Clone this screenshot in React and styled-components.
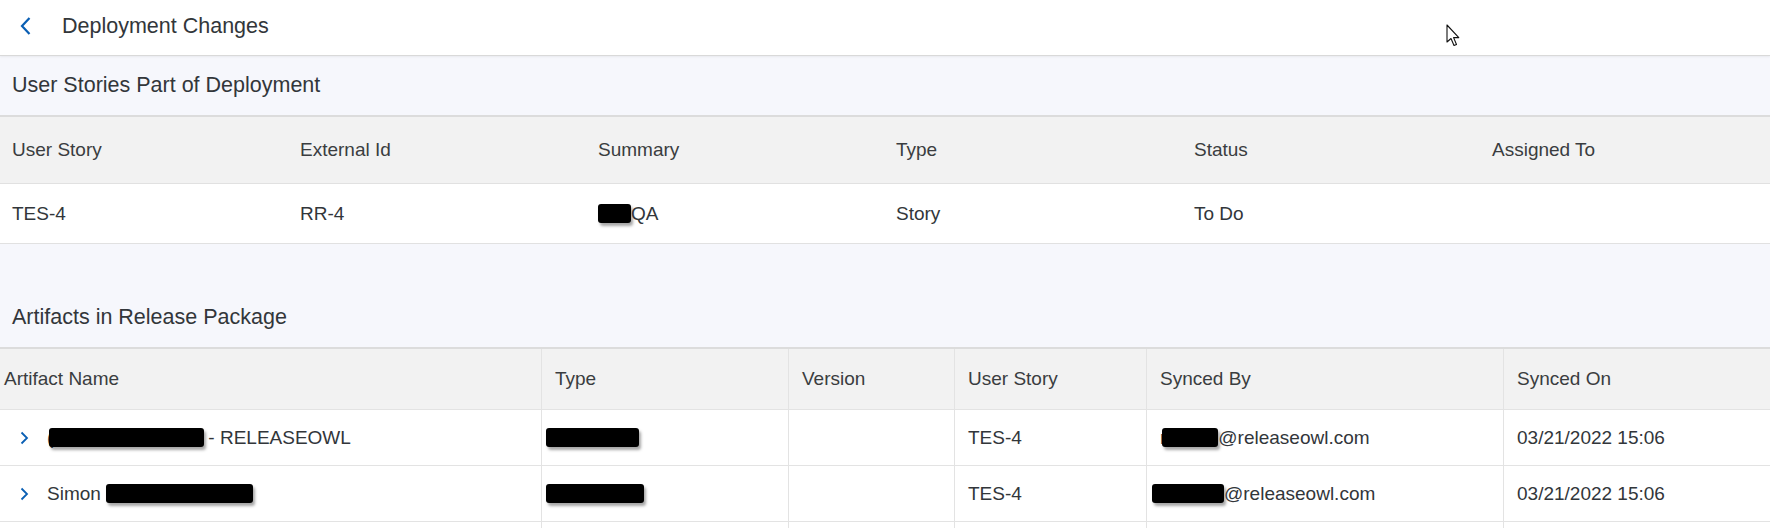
import styled, { createGlobalStyle } from "styled-components";

const GlobalStyle = createGlobalStyle`
  html, body {
    margin: 0;
    padding: 0;
    background: #f6f7fc;
  }
  body {
    font-family: "Liberation Sans", Arial, sans-serif;
    color: #32363a;
  }
  * {
    box-sizing: border-box;
  }
`;

const stories = [
  { id: "TES-4", external: "RR-4", summary: "QA", type: "Story", status: "To Do", assigned: "" },
];

const artifacts = [
  { pre: "(", hidden: 155, gap: 4, post: "- RELEASEOWL", typeBox: 93, story: "TES-4", userBox: 56, userPre: "r", synced: "03/21/2022 15:06" },
  { pre: "Simon", hidden: 147, gap: 0, post: "", typeBox: 98, story: "TES-4", userBox: 72, userPre: "", synced: "03/21/2022 15:06" },
  { pre: "", hidden: 0, gap: 0, post: "", typeBox: 0, story: "", userBox: 0, userPre: "", synced: "" },
];

const storyColumns = ["User Story", "External Id", "Summary", "Type", "Status", "Assigned To"];
const artifactColumns = ["Artifact Name", "Type", "Version", "User Story", "Synced By", "Synced On"];

const App = () => {
  return (
    <Page>
      <GlobalStyle />
      <TopBar>
        <BackButton>
          <svg width="13" height="20" viewBox="0 0 13 20">
            <path d="M10.5 2 L3 10 L10.5 18" fill="none" stroke="#0a5fb4" strokeWidth="2.2" />
          </svg>
        </BackButton>
        <PageTitle>Deployment Changes</PageTitle>
        <Cursor width="15" height="24" viewBox="0 0 15 24">
          <path
            d="M1 1 L1 18 L5 14.5 L8 21.5 L10.5 20.5 L7.6 13.6 L12.8 13.6 Z"
            fill="#fff"
            stroke="#111"
            strokeWidth="1.1"
            strokeLinejoin="round"
          />
        </Cursor>
      </TopBar>

      <Section>
        <SectionTitle>User Stories Part of Deployment</SectionTitle>
        <StoryRow $head>
          {storyColumns.map((c) => (
            <StoryCell key={c}>{c}</StoryCell>
          ))}
        </StoryRow>
        {stories.map((s) => (
          <StoryRow key={s.id}>
            <StoryCell>{s.id}</StoryCell>
            <StoryCell>{s.external}</StoryCell>
            <StoryCell>
              <Redacted $w={33} />
              {s.summary}
            </StoryCell>
            <StoryCell>{s.type}</StoryCell>
            <StoryCell>{s.status}</StoryCell>
            <StoryCell>{s.assigned}</StoryCell>
          </StoryRow>
        ))}
      </Section>

      <Section $spaced>
        <SectionTitle>Artifacts in Release Package</SectionTitle>
        <ArtifactRow $head>
          {artifactColumns.map((c, i) => (
            <ArtifactCell key={c} $first={i === 0}>
              {c}
            </ArtifactCell>
          ))}
        </ArtifactRow>
        {artifacts.map((a, i) => (
          <ArtifactRow key={i}>
            <ArtifactCell $first $name>
              {a.story && (
                <Expand width="9" height="14" viewBox="0 0 9 14">
                  <path d="M1.5 1.5 L7 7 L1.5 12.5" fill="none" stroke="#0a5fb4" strokeWidth="1.8" />
                </Expand>
              )}
              {a.pre}
              {a.hidden > 0 && (
                <Redacted $w={a.hidden} $shift={a.pre === "(" ? -4 : 5} $after={a.gap} />
              )}
              {a.post}
            </ArtifactCell>
            <ArtifactCell>{a.typeBox > 0 && <Redacted $w={a.typeBox} $shift={-9} />}</ArtifactCell>
            <ArtifactCell />
            <ArtifactCell>{a.story}</ArtifactCell>
            <ArtifactCell>
              {a.story && (
                <>
                  {a.userPre}
                  <Redacted $w={a.userBox} $shift={a.userPre ? -4 : -8} />
                  @releaseowl.com
                </>
              )}
            </ArtifactCell>
            <ArtifactCell>{a.synced}</ArtifactCell>
          </ArtifactRow>
        ))}
      </Section>
    </Page>
  );
};

const Page = styled.div`
  width: 1770px;
  height: 528px;
  background: #f6f7fc;
  overflow: hidden;
`;

const TopBar = styled.header`
  position: relative;
  height: 56px;
  display: flex;
  align-items: center;
  background: #ffffff;
  border-bottom: 1px solid #d9d9d9;
  box-shadow: 0 1px 2px rgba(0, 0, 0, 0.06);
  padding-left: 19px;
`;

const BackButton = styled.div`
  width: 13px;
  height: 20px;
  display: flex;
  margin-top: -4px;
`;

const PageTitle = styled.div`
  margin-left: 30px;
  margin-top: -2px;
  font-size: 21.5px;
  color: #32363a;
`;

const Cursor = styled.svg`
  position: absolute;
  left: 1446px;
  top: 24px;
`;

const Section = styled.section`
  margin-top: ${(p) => (p.$spaced ? "44px" : "0")};
`;

const SectionTitle = styled.div`
  height: 61px;
  display: flex;
  align-items: center;
  padding-left: 12px;
  font-size: 21.5px;
  color: #32363a;
  background: #f6f7fc;
  border-bottom: 2px solid #dcdcdc;
`;

const StoryRow = styled.div`
  display: grid;
  grid-template-columns: 288px 298px 298px 298px 298px 1fr;
  align-items: center;
  padding-left: 12px;
  height: ${(p) => (p.$head ? "67px" : "60px")};
  background: ${(p) => (p.$head ? "#f2f2f2" : "#ffffff")};
  border-bottom: 1px solid #e1e1e1;
  font-size: 19px;
  color: ${(p) => (p.$head ? "#3a3d40" : "#32363a")};
`;

const StoryCell = styled.div`
  display: flex;
  align-items: center;
  white-space: nowrap;
`;

const ArtifactRow = styled.div`
  display: grid;
  grid-template-columns: 541px 247px 166px 192px 357px 1fr;
  height: ${(p) => (p.$head ? "61px" : "56px")};
  background: ${(p) => (p.$head ? "#f2f2f2" : "#ffffff")};
  border-bottom: 1px solid #e3e3e3;
  font-size: 19px;
  color: ${(p) => (p.$head ? "#3a3d40" : "#32363a")};
`;

const ArtifactCell = styled.div`
  display: flex;
  align-items: center;
  white-space: nowrap;
  padding-left: ${(p) => (p.$name ? "20px" : p.$first ? "4px" : "13px")};
  border-left: ${(p) => (p.$first ? "none" : "1px solid #e3e3e3")};
`;

const Expand = styled.svg`
  margin-right: 18px;
  flex-shrink: 0;
`;

const Redacted = styled.span`
  display: inline-block;
  width: ${(p) => p.$w}px;
  height: 19px;
  margin-left: ${(p) => p.$shift || 0}px;
  margin-right: ${(p) => p.$after || 0}px;
  background: #000;
  border-radius: 3px;
  box-shadow: 2px 3px 3px rgba(0, 0, 0, 0.35);
`;

export default App;
